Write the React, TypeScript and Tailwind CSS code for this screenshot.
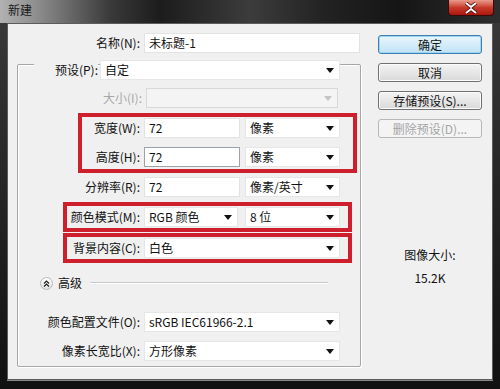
import React from "react";

const FONT = '"Noto Sans CJK SC", "Noto Sans", sans-serif';

function Arrow({ disabled }: { disabled?: boolean }) {
  return (
    <svg width="8" height="5" viewBox="0 0 8 5" className="shrink-0">
      <path d="M0 0 L8 0 L4 5 Z" fill={disabled ? "#c4c4c4" : "#111"} />
    </svg>
  );
}

function Select({ w, text, disabled }: { w: string; text?: string; disabled?: boolean }) {
  return (
    <div
      className={`${w} h-[20px] flex items-center justify-between pl-[4px] pr-[5px] border ${
        disabled ? "bg-[#f4f4f4] border-[#d9d9d9]" : "bg-white border-[#e6e6e6]"
      }`}
    >
      <span className="text-[12px] leading-none text-[#111] whitespace-nowrap">{text}</span>
      <Arrow disabled={disabled} />
    </div>
  );
}

function Input({ w, text, focused }: { w: string; text: string; focused?: boolean }) {
  return (
    <div
      className={`${w} h-[20px] flex items-center pl-[4px] bg-white border ${
        focused ? "border-[#9aa3ab]" : "border-[#e3e3e3]"
      }`}
    >
      <span className="text-[12px] leading-none text-[#111] whitespace-nowrap">{text}</span>
    </div>
  );
}

function Label({ w, text, disabled }: { w: string; text: string; disabled?: boolean }) {
  return (
    <div className={`${w} shrink-0 text-right text-[12px] leading-none whitespace-nowrap ${disabled ? "text-[#a8a8a8]" : "text-[#111]"}`}>
      {text}
    </div>
  );
}

function Button({ text, primary, disabled }: { text: string; primary?: boolean; disabled?: boolean }) {
  const cls = primary
    ? "border-[#3c7fb1] bg-gradient-to-b from-[#eaf6fd] to-[#bfe3f6] shadow-[inset_0_0_0_1px_#9fd5f3]"
    : disabled
    ? "border-[#b5b8ba] bg-[#f4f4f4] text-[#a5a5a5]"
    : "border-[#707070] bg-gradient-to-b from-[#f4f4f4] to-[#d9d9d9] shadow-[inset_0_0_0_1px_#fbfbfb]";
  return (
    <div className={`w-[104px] h-[19px] rounded-[3px] border flex items-center justify-center text-[12px] leading-none ${disabled ? "" : "text-[#111]"} ${cls}`}>
      {text}
    </div>
  );
}

export default function App() {
  return (
    <div
      className="w-[500px] h-[389px] overflow-hidden flex flex-col bg-gradient-to-b from-[#3a3a3a] to-[#111]"
      style={{ fontFamily: FONT }}
    >
      {/* Title bar */}
      <div className="h-[23px] shrink-0 flex justify-between bg-[linear-gradient(to_right,#b2b2b2_0%,#8a8a8a_8%,#3a3a3a_22%,#1c1c1c_32%,#3c3c3c_50%,#222_65%,#151515_80%,#2e2e2e_100%)]">
        <div className="pl-[8px] pt-[3px] text-[12px] leading-[14px] text-[#1a1a1a]">新建</div>
        <div className="mr-[6px] w-[46px] h-[16px] rounded-b-[4px] border border-t-0 border-[#3a0a0a] bg-gradient-to-b from-[#e89a8c] via-[#c9392a] to-[#a9160c] flex items-center justify-center">
          <svg width="14" height="12" viewBox="0 0 14 12">
            <path d="M2 1 L7 5 L12 1 M2 11 L7 7 L12 11" stroke="#3a0808" strokeWidth="3.4" fill="none" />
            <path d="M2 1 L7 5 L12 1 M2 11 L7 7 L12 11" stroke="#fff" strokeWidth="2" fill="none" />
          </svg>
        </div>
      </div>

      {/* Dialog body */}
      <div className="mx-[7px] h-[357px] shrink-0 bg-[#f0f0f0] border border-[#5c5c5c] flex shadow-[0_1px_0_#8a8a8a]">
        {/* Left column */}
        <div className="w-[353px] shrink-0 flex flex-col">
          {/* Name */}
          <div className="mt-[9px] flex items-center">
            <Label w="w-[132px]" text="名称(N):" />
            <div className="ml-[4px]">
              <Input w="w-[216px]" text="未标题-1" />
            </div>
          </div>

          {/* Group box */}
          <div className="mt-[11px] ml-[9px] w-[344px] h-[303px] border border-[#a6a6a6] rounded-[2px] shadow-[inset_1px_1px_0_#ffffff,1px_1px_0_#ffffff] flex flex-col">
            {/* Preset legend row */}
            <div className="-mt-[5px] ml-[16px] flex items-center">
              <div className="w-[64px] h-[20px] bg-[#f0f0f0] flex items-center justify-end">
                <span className="text-[12px] leading-none text-[#111] whitespace-nowrap">预设(P):</span>
              </div>
              <div className="ml-[2px]">
                <Select w="w-[240px]" text="自定" />
              </div>
            </div>

            {/* Size (disabled) */}
            <div className="mt-[8px] flex items-center">
              <Label w="w-[124px]" text="大小(I):" disabled />
              <div className="ml-[4px]">
                <Select w="w-[192px]" disabled />
              </div>
            </div>

            {/* Red box 1 */}
            <div className="mt-[5px] ml-[60px] w-[279px] border-4 border-[#cd1f2c] pt-[1px] pb-[2px] flex flex-col gap-[9px]">
              <div className="flex items-center">
                <Label w="w-[58px]" text="宽度(W):" />
                <div className="ml-[4px]"><Input w="w-[96px]" text="72" /></div>
                <div className="ml-[5px]"><Select w="w-[95px]" text="像素" /></div>
              </div>
              <div className="flex items-center">
                <Label w="w-[58px]" text="高度(H):" />
                <div className="ml-[4px]"><Input w="w-[96px]" text="72" focused /></div>
                <div className="ml-[5px]"><Select w="w-[95px]" text="像素" /></div>
              </div>
            </div>

            {/* Resolution */}
            <div className="mt-[4px] flex items-center">
              <Label w="w-[122px]" text="分辨率(R):" />
              <div className="ml-[4px]"><Input w="w-[96px]" text="72" /></div>
              <div className="ml-[5px]"><Select w="w-[95px]" text="像素/英寸" /></div>
            </div>

            {/* Red box 2 */}
            <div className="mt-[5px] ml-[45px] w-[289px] border-4 border-[#cd1f2c] py-[1px] flex items-center">
              <Label w="w-[73px]" text="颜色模式(M):" />
              <div className="ml-[4px]"><Select w="w-[94px]" text="RGB 颜色" /></div>
              <div className="ml-[7px]"><Select w="w-[95px]" text="8 位" /></div>
            </div>

            {/* Red box 3 */}
            <div className="mt-[1px] ml-[45px] w-[289px] border-4 border-[#cd1f2c] py-[1px] flex items-center">
              <Label w="w-[73px]" text="背景内容(C):" />
              <div className="ml-[4px]"><Select w="w-[196px]" text="白色" /></div>
            </div>

            {/* Advanced */}
            <div className="mt-[13px] h-[14px] flex items-center">
              <div className="ml-[22px] w-[13px] h-[13px] rounded-full border border-[#b8b8b8] bg-gradient-to-b from-white to-[#e2e2e2] flex items-center justify-center">
                <svg width="7" height="7" viewBox="0 0 7 7">
                  <path d="M1 3.5 L3.5 1 L6 3.5 M1 6.5 L3.5 4 L6 6.5" stroke="#222" strokeWidth="1.2" fill="none" />
                </svg>
              </div>
              <span className="ml-[5px] text-[12px] leading-none text-[#111]">高级</span>
              <div className="ml-[8px] mr-[32px] flex-1 h-[2px] border-t border-[#c8c8c8] border-b border-b-white" />
            </div>

            {/* Color profile */}
            <div className="mt-[22px] flex items-center">
              <Label w="w-[122px]" text="颜色配置文件(O):" />
              <div className="ml-[4px]"><Select w="w-[196px]" text="sRGB IEC61966-2.1" /></div>
            </div>

            {/* Pixel aspect */}
            <div className="mt-[9px] flex items-center">
              <Label w="w-[122px]" text="像素长宽比(X):" />
              <div className="ml-[4px]"><Select w="w-[196px]" text="方形像素" /></div>
            </div>
          </div>
        </div>

        {/* Right column */}
        <div className="ml-[17px] mt-[11px] flex flex-col items-center w-[104px]">
          <div className="flex flex-col gap-[9px]">
            <Button text="确定" primary />
            <Button text="取消" />
            <Button text="存储预设(S)..." />
            <Button text="删除预设(D)..." disabled />
          </div>
          <div className="mt-[111px] text-[12px] leading-none text-[#111] whitespace-nowrap">图像大小:</div>
          <div className="mt-[11px] text-[12px] leading-none text-[#111]">15.2K</div>
        </div>
      </div>
    </div>
  );
}
